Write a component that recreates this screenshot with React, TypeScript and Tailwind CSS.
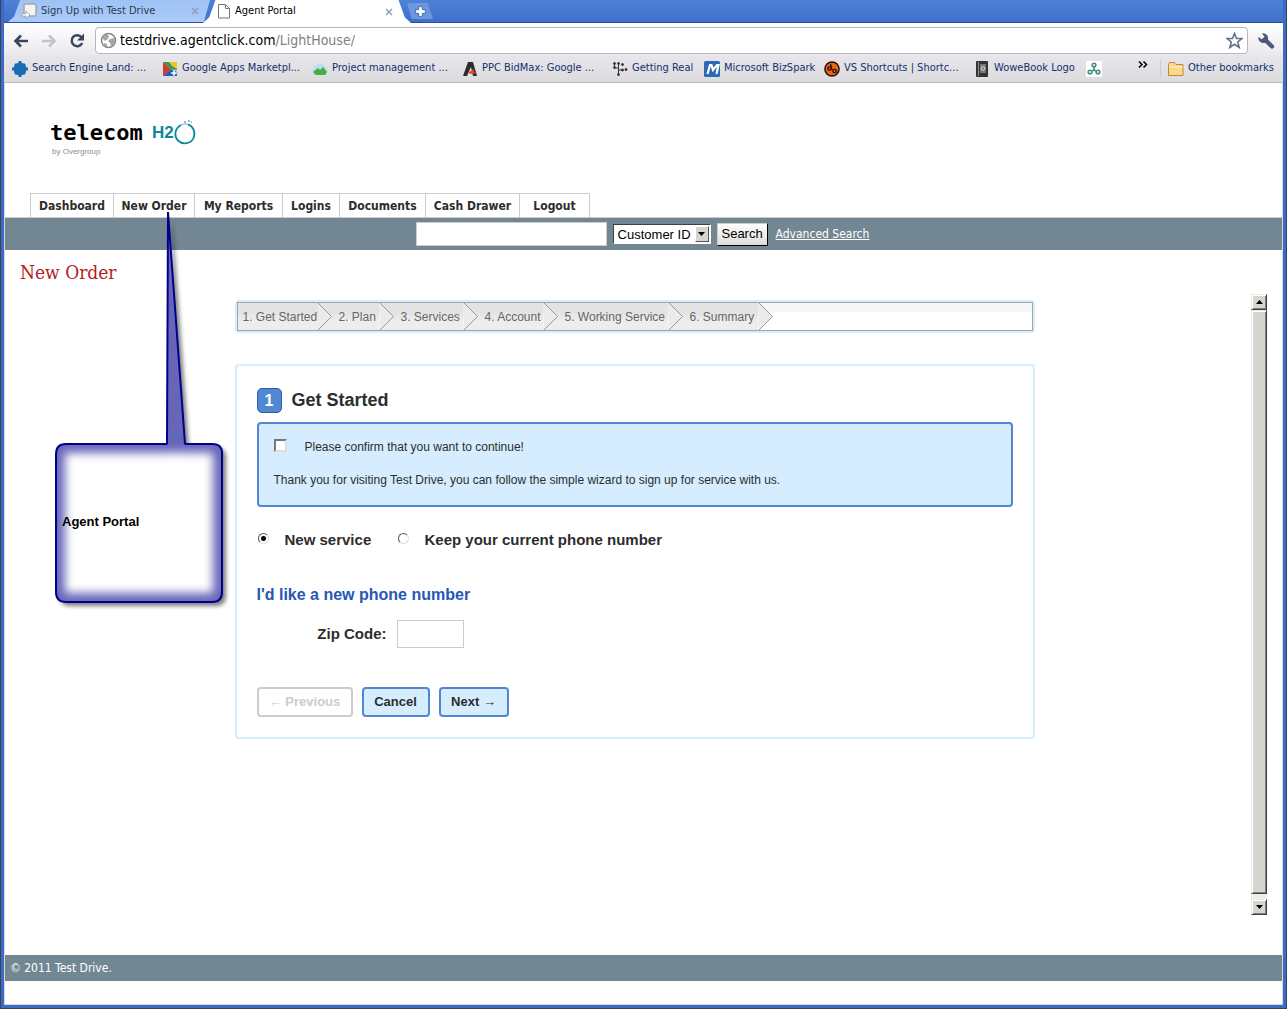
import type { ReactNode } from "react";

const chromeFont = "font-['DejaVu_Sans_Condensed','DejaVu_Sans',sans-serif]";

function CloseMark() {
  return (
    <svg width="8" height="8" viewBox="0 0 8 8" stroke="#8b9bb5" strokeWidth="1.4" aria-hidden="true">
      <path d="M1 1l6 6M7 1L1 7" />
    </svg>
  );
}

function TabStrip() {
  return (
    <div className={`flex h-[23px] items-stretch border-b border-[#2a5198] bg-linear-to-b from-[#4e82d8] to-[#3f6fcb] pl-1 text-[11px] ${chromeFont}`}>
      <div className="z-0 flex w-[202px] items-center bg-linear-to-b from-[#9fc2f5] to-[#abcbf9] pl-[13px] pr-[11px] text-[#2b3a52] [clip-path:polygon(0_100%,3%_75%,6%_0,100%_0,97%_100%)]">
        <svg width="16" height="16" viewBox="0 0 16 16" className="mr-1 shrink-0" aria-hidden="true">
          <rect x="3" y="1" width="12" height="12" rx="1.500" fill="#f4f4f4" stroke="#a5a5a5" strokeWidth="1.500" />
          <path d="M1 10.500h4V8l4 4-4 3.500V13H1z" fill="#fff" stroke="#999" strokeWidth=".8" />
        </svg>
        <span className="flex-1 whitespace-nowrap">Sign Up with Test Drive</span>
        <CloseMark />
      </div>
      <div className="z-10 -ml-[7px] -mb-px flex w-[208px] items-center bg-white pl-[15px] pr-[18px] text-black [clip-path:polygon(0_100%,3%_75%,6%_0,94%_0,97%_75%,100%_100%)]">
        <svg width="12" height="15" viewBox="0 0 12 15" fill="#fff" stroke="#777" className="mr-[5px] shrink-0" aria-hidden="true">
          <path d="M.5 .5h7l4 4v9.500H.5zM7.500 .5v4h4" />
        </svg>
        <span className="flex-1 whitespace-nowrap">Agent Portal</span>
        <CloseMark />
      </div>
      <button aria-label="New tab" className="-ml-1 mt-[3px] flex h-4 w-[26px] items-center justify-center bg-[#6c97dd] [clip-path:polygon(0_0,80%_0,100%_100%,18%_100%)]">
        <svg width="11" height="11" viewBox="0 0 9 9" fill="#fff" stroke="#3563ad" strokeWidth=".7" aria-hidden="true">
          <path d="M3 .5h3V3h2.500v3H6v2.500H3V6H.5V3H3z" />
        </svg>
      </button>
    </div>
  );
}

function Toolbar() {
  return (
    <div className="flex h-8 items-center bg-linear-to-b from-white to-[#ebe9ee] pt-[3px] pl-[9px] pr-2">
      <button aria-label="Back" className="mr-3">
        <svg width="16" height="14" viewBox="0 0 16 14" fill="none" stroke="#3c475c" strokeWidth="2.600" aria-hidden="true">
          <path d="M15 7H3M8 1.500L2.500 7 8 12.500" />
        </svg>
      </button>
      <button aria-label="Forward" className="mr-3">
        <svg width="16" height="14" viewBox="0 0 16 14" fill="none" stroke="#c3c5cb" strokeWidth="2.600" aria-hidden="true">
          <path d="M1 7h12M8 1.500L13.500 7 8 12.500" />
        </svg>
      </button>
      <button aria-label="Reload" className="mr-2.5">
        <svg width="16" height="16" viewBox="0 0 16 16" aria-hidden="true">
          <path d="M12.500 4.200A5.500 5.500 0 1 0 13.200 10" fill="none" stroke="#3c475c" strokeWidth="2.500" />
          <path d="M15 .5v7H8z" fill="#3c475c" />
        </svg>
      </button>
      <div className="flex h-[27px] min-w-0 flex-1 items-center rounded border border-[#b3b7c3] bg-white pl-1 pr-1">
        <svg width="17" height="17" viewBox="0 0 17 17" className="mr-[3px] shrink-0" aria-hidden="true">
          <circle cx="8.500" cy="8.500" r="7" fill="#fff" stroke="#858585" strokeWidth="1.500" />
          <path d="M3 4l4-2 2 2-1 3-3 2-2-2zM10 7l4-1 1 3-2 4-2 1-1-3-2-2zM4 11l3 1v3l-3-2z" fill="#a5a5a5" />
        </svg>
        <div className={`flex-1 truncate text-[14px] text-black ${chromeFont}`}>
          testdrive.agentclick.com<span className="text-[#808080]">/LightHouse/</span>
        </div>
        <svg width="17" height="17" viewBox="0 0 17 17" fill="#fff" stroke="#64718b" strokeWidth="1.600" aria-hidden="true">
          <path d="M8.500 1.500l2 5h5.500l-4.300 3.500 1.500 5.500-4.700-3.200-4.700 3.200 1.500-5.500L1 6.500h5.500z" />
        </svg>
      </div>
      <button aria-label="Settings" className="ml-[9px]">
        <svg width="18" height="18" viewBox="0 0 18 18" aria-hidden="true">
          <path d="M5 1.500a5 5 0 0 1 6 6l5.500 5.500a2 2 0 0 1-3 3L8 10.800A5 5 0 0 1 1.500 5l3.300 2.300 2.700-2.500z" fill="#4a5b7c" />
        </svg>
      </button>
    </div>
  );
}

function Glyph({ children }: { children: ReactNode }) {
  return (
    <svg width="16" height="16" viewBox="0 0 16 16" className="mr-1 shrink-0" aria-hidden="true">
      {children}
    </svg>
  );
}

const bookmarks: { label: string; width: string; icon: ReactNode }[] = [
  {
    label: "Search Engine Land: ...",
    width: "w-[150px]",
    icon: (
      <g fill="#1a6cb4">
        <circle cx="8" cy="8" r="6.500" />
        <path d="M6.500 0h3v16h-3zM0 6.500h16v3H0z" />
        <path d="M2 4l2-2 10 10-2 2zM12 2l2 2L4 14l-2-2z" />
      </g>
    ),
  },
  {
    label: "Google Apps Marketpl...",
    width: "w-[150px]",
    icon: (
      <g>
        <path d="M1 1l8 7-8 7z" fill="#d9382c" />
        <path d="M1 1h6l8 5v3L9 8z" fill="#2f9e44" />
        <path d="M7 1h8v7l-5-3z" fill="#f2c230" />
        <path d="M1 15l8-7 6 3v4z" fill="#1f5fae" />
        <path d="M9 11h2V9h2v2h2v2h-2v2h-2v-2H9z" fill="#fff" stroke="#5580b5" strokeWidth=".5" />
      </g>
    ),
  },
  {
    label: "Project management ...",
    width: "w-[150px]",
    icon: (
      <g>
        <path d="M4 14a4 4 0 0 1-2-7 6 6 0 0 1 11-1 4.300 4.300 0 0 1 0 8z" fill="#b9dff0" />
        <path d="M1 11l5-4 2 2 3-3 4 5-2 3H4z" fill="#45ad45" />
      </g>
    ),
  },
  {
    label: "PPC BidMax: Google ...",
    width: "w-[150px]",
    icon: (
      <g>
        <path d="M6 1h5l4 14h-4L9 6l-4 9H1z" fill="#2c2c2c" />
        <path d="M4 13l8-5v3l3 1-5 1-4-1z" fill="#e8402c" />
      </g>
    ),
  },
  {
    label: "Getting Real",
    width: "w-[92px]",
    icon: (
      <g fill="#333" stroke="#333">
        <path d="M2.500 2v5h4M6.500 2v12M6.500 9H11" fill="none" strokeWidth="1" />
        <circle cx="2.500" cy="2.500" r="1" />
        <circle cx="2.500" cy="6.500" r="1" />
        <circle cx="6.500" cy="2.500" r="1" />
        <circle cx="6.500" cy="13.500" r="1" />
        <circle cx="10.500" cy="3.500" r="1" />
        <circle cx="10.500" cy="9" r="1" />
        <circle cx="14" cy="8.500" r="1" />
      </g>
    ),
  },
  {
    label: "Microsoft BizSpark",
    width: "w-[120px]",
    icon: (
      <g>
        <rect width="16" height="16" rx="1.500" fill="#2d68b8" />
        <path d="M3.500 13L6 4h1.500l1.500 5 4-5h1.500l-2 9" fill="none" stroke="#fff" strokeWidth="2.200" />
      </g>
    ),
  },
  {
    label: "VS Shortcuts | Shortc...",
    width: "w-[150px]",
    icon: (
      <g>
        <circle cx="8" cy="8" r="7.800" fill="#1c1410" />
        <circle cx="8" cy="8" r="6.300" fill="#f0640c" />
        <circle cx="5.500" cy="7.500" r="1.700" fill="none" stroke="#1c1410" strokeWidth="1.300" />
        <circle cx="10.500" cy="10" r="1.700" fill="none" stroke="#1c1410" strokeWidth="1.300" />
        <path d="M6.500 3l1.500 6" stroke="#1c1410" strokeWidth="1.300" />
      </g>
    ),
  },
  {
    label: "WoweBook Logo",
    width: "w-[112px]",
    icon: (
      <g>
        <rect x="2" y="0" width="12" height="16" rx="1" fill="#333" />
        <path d="M4.500 1v14" stroke="#aaa" strokeWidth=".8" />
        <rect x="6" y="3" width="6" height="9" fill="#777" />
        <circle cx="9" cy="7.500" r="1.800" fill="none" stroke="#ddd" />
      </g>
    ),
  },
  {
    label: "",
    width: "w-4",
    icon: (
      <g>
        <rect width="16" height="16" fill="#fff" />
        <g fill="none" stroke="#458c84" strokeWidth="1.600">
          <circle cx="8" cy="4" r="1.800" />
          <circle cx="4" cy="11" r="1.800" />
          <circle cx="12" cy="11" r="1.800" />
          <path d="M8 6v3l-2 1M8 9l2 1" />
        </g>
      </g>
    ),
  },
];

function Bookmarks() {
  return (
    <nav aria-label="Bookmarks" className={`flex h-[28px] items-center border-b border-[#b5bac8] bg-linear-to-b from-[#e8e6eb] to-[#dcdbdd] pl-2 pr-[9px] text-[11px] text-[#15306e] ${chromeFont}`}>
      {bookmarks.map((b) => (
        <a key={b.label} href="#" aria-label={b.label || "Bookmark"} className={`flex shrink-0 items-center whitespace-nowrap ${b.width}`}>
          <Glyph>{b.icon}</Glyph>
          {b.label}
        </a>
      ))}
      <button aria-label="More bookmarks" className="ml-auto mr-3 mb-2">
        <svg width="10" height="7" viewBox="0 0 10 7" fill="none" stroke="#000" strokeWidth="1.500" aria-hidden="true">
          <path d="M1 .5l3 3-3 3M5.500 .5l3 3-3 3" />
        </svg>
      </button>
      <a href="#" className="flex items-center border-l border-[#ccced4] pl-1.5">
        <svg width="16" height="14" viewBox="0 0 16 14" className="mr-1 ml-px" aria-hidden="true">
          <path d="M.5 2.500l1-2h5l1.500 2h7v11H.5z" fill="#fbd88c" stroke="#b98a3a" />
          <path d="M1 5h14" stroke="#fff0c8" />
        </svg>
        Other bookmarks
      </a>
    </nav>
  );
}

function Logo() {
  return (
    <a href="#" aria-label="telecom H2O by Overgroup" className="block w-[150px] pt-[36px]">
      <div className="flex h-[28px] items-center">
        <span className="w-[102px] font-['DejaVu_Sans_Mono',monospace] text-[22px] leading-7 font-bold text-black">telecom</span>
        <span className="w-[21px] font-['Liberation_Sans',sans-serif] text-[17px] leading-7 font-bold text-[#0d8799]">H2</span>
        <svg width="24" height="26" viewBox="0 0 24 26" fill="none" stroke="#0d8799" aria-hidden="true">
          <path d="M8 5C2 8 .500 16 5 20.500s13 3.500 15.500-2.500S20 6 15 4.500" strokeWidth="1.800" />
          <path d="M7 6c3-2.500 6-2.500 9-1" strokeWidth=".7" />
          <path d="M11 2h2M15 1h2M18 2h1" strokeWidth="1.200" />
        </svg>
      </div>
      <div className="pl-0.5 font-['Liberation_Sans',sans-serif] text-[8px] leading-[10px] text-[#8c8c8c]">by Overgroup</div>
    </a>
  );
}

const navItems = [
  ["Dashboard", "w-[84px]"],
  ["New Order", "w-[81px]"],
  ["My Reports", "w-[88px]"],
  ["Logins", "w-[57px]"],
  ["Documents", "w-[86px]"],
  ["Cash Drawer", "w-[94px]"],
  ["Logout", "w-[70px]"],
];

function SearchBar() {
  return (
    <form className="flex h-[33px] items-center justify-center border-t border-[#ccc] bg-[#738793] pr-0.5 font-['Liberation_Sans',sans-serif] text-[13px]">
      <input type="text" aria-label="Search text" className="mr-1.5 h-6 w-[191px] border border-[#ccc] bg-white px-1" />
      <div className="relative mr-1.5 h-5 w-[98px]">
        <select aria-label="Search by" className="h-5 w-full appearance-none border border-t-[#404040] border-l-[#404040] border-r-white border-b-white bg-white pl-1 text-black">
          <option>Customer ID</option>
        </select>
        <span className="pointer-events-none absolute top-0.5 right-0.5 flex h-4 w-[14px] items-center justify-center border border-t-white border-l-white border-r-[#555] border-b-[#555] bg-[#d6d6ce]">
          <svg width="7" height="4" viewBox="0 0 7 4" aria-hidden="true"><path d="M0 0h7L3.500 4z" /></svg>
        </span>
      </div>
      <button type="button" className="mr-2 h-[23px] w-[51px] border border-t-[#ccc] border-l-[#ccc] border-r-black border-b-black bg-linear-to-b from-white to-[#dfdcd8] text-black">Search</button>
      <a href="#" className={`text-[12px] whitespace-nowrap text-white underline ${chromeFont}`}>Advanced Search</a>
    </form>
  );
}

const steps = [
  ["1. Get Started", "w-[94px]"],
  ["2. Plan", "w-[76px]"],
  ["3. Services", "w-[98px]"],
  ["4. Account", "w-[94px]"],
  ["5. Working Service", "w-[139px]"],
  ["6. Summary", "w-[104px]"],
];

function Steps() {
  return (
    <div className="rounded-[4px] border-2 border-[#d5eefe]">
      <ol className="flex h-[29px] border border-[#a5a5a5] bg-linear-to-b from-[#f6f6f6] from-35% to-white to-35%">
        {steps.map(([label, width], i) => (
          <li key={label} className={`flex ${width} ${i === 0 ? "" : "-ml-[14px]"}`}>
            <span className={`flex flex-1 items-center bg-linear-to-b from-[#e3e3e3] from-35% to-[#ededed] to-65% whitespace-nowrap text-[#666] ${i === 0 ? "pl-[5px]" : "pl-[21px] [clip-path:polygon(0_0,100%_0,100%_100%,0_100%,14px_50%)]"}`}>
              {label}
            </span>
            <svg width="14" height="27" viewBox="0 0 14 27" className="relative z-10 shrink-0" aria-hidden="true">
              <path d="M0 0l13.500 13.500L0 27z" fill="#ebebeb" />
              <path d="M0 0l13.500 13.500L0 27" fill="none" stroke="#999" />
            </svg>
          </li>
        ))}
      </ol>
    </div>
  );
}

const radioClass =
  "size-[11px] shrink-0 appearance-none rounded-full border border-t-[#555] border-l-[#555] border-r-[#ddd] border-b-[#ddd] bg-white checked:bg-[radial-gradient(circle,#000_0_2px,#fff_3px)]";
const wizardButton = "h-[30px] rounded-[4px] border-2 whitespace-nowrap text-[13px] font-bold";

function Wizard() {
  return (
    <section className="mt-[31px] rounded-[4px] border-2 border-[#d5eefe] px-5 pt-[22px] pb-5">
      <h2 className="flex items-center text-[18px] leading-[25px] font-bold text-[#2d2d2d]">
        <span className="mr-2.5 flex size-[25px] items-center justify-center rounded-[5px] border border-[#2d5cb8] bg-[#5288d2] text-[16px] text-white">1</span>
        Get Started
      </h2>
      <div className="mt-[9px] h-[85px] rounded-[4px] border-2 border-[#5187d2] bg-[#d5edfe] px-[15px] pt-3.5">
        <label className="flex h-[18px] items-center">
          <input type="checkbox" className="mr-[18px] mb-1 size-[13px] appearance-none border-2 border-t-[#777] border-l-[#777] border-r-[#ddd] border-b-[#ddd] bg-white checked:bg-[#333]" />
          Please confirm that you want to continue!
        </label>
        <p className="mt-[15px] leading-[18px]">Thank you for visiting Test Drive, you can follow the simple wizard to sign up for service with us.</p>
      </div>
      <fieldset className="mt-6 flex h-[18px] items-center text-[15px] font-bold">
        <label className="flex items-center">
          <input type="radio" name="service" defaultChecked className={`mr-4 mb-1 ml-px ${radioClass}`} />
          <span className="w-[113px]">New service</span>
        </label>
        <label className="flex items-center">
          <input type="radio" name="service" className={`mr-4 mb-1 ${radioClass}`} />
          Keep your current phone number
        </label>
      </fieldset>
      <h3 className="mt-9 text-[16px] leading-5 font-bold text-[#2657b4]">I'd like a new phone number</h3>
      <div className="mt-[15px] flex items-center">
        <label htmlFor="zip" className="mr-2.5 w-[130px] text-right text-[15px] font-bold">Zip Code:</label>
        <input id="zip" type="text" className="h-7 w-[67px] border border-[#ccc] bg-white px-1" />
      </div>
      <div className="mt-[39px] flex gap-[9px]">
        <button disabled className={`w-24 border-[#ccc] bg-white text-[#ccc] ${wizardButton}`}>← Previous</button>
        <button className={`w-[68px] border-[#5187d2] bg-[#d5edfe] text-[#2d2d2d] ${wizardButton}`}>Cancel</button>
        <button className={`w-[70px] border-[#5187d2] bg-[#d5edfe] text-[#2d2d2d] ${wizardButton}`}>Next →</button>
      </div>
    </section>
  );
}

const bevel = "border border-t-[#e8e8e4] border-l-[#e8e8e4] border-r-[#404040] border-b-[#404040] bg-[#d6d6ce] shadow-[inset_1px_1px_0_#fff,inset_-1px_-1px_0_#808080]";

function ScrollBar() {
  return (
    <div className="flex w-4 shrink-0 flex-col bg-[#eeeeea]">
      <button aria-label="Scroll up" className={`flex h-4 items-center justify-center ${bevel}`}>
        <svg width="7" height="4" viewBox="0 0 7 4" aria-hidden="true"><path d="M0 4h7L3.500 0z" /></svg>
      </button>
      <div className={`flex-1 ${bevel}`} />
      <button aria-label="Scroll down" className={`mt-[5px] flex h-4 items-center justify-center ${bevel}`}>
        <svg width="7" height="4" viewBox="0 0 7 4" aria-hidden="true"><path d="M0 0h7L3.500 4z" /></svg>
      </button>
    </div>
  );
}

const calloutPath = "M118 7L135 239H163Q172 239 172 248V387Q172 397 162 397H16Q6 397 6 387V249Q6 239 16 239H117Z";

function Callout() {
  return (
    <aside className="pointer-events-none absolute top-[205px] left-[46px] z-20 h-[412px] w-[186px]">
      <svg width="186" height="412" viewBox="0 0 186 412" aria-hidden="true">
        <defs>
          <clipPath id="callout-clip"><path d={calloutPath} /></clipPath>
          <filter id="callout-glow" x="-20%" y="-20%" width="140%" height="140%"><feGaussianBlur stdDeviation="5" /></filter>
          <filter id="callout-shadow" x="-20%" y="-20%" width="140%" height="140%"><feGaussianBlur stdDeviation="2" /></filter>
        </defs>
        <path d={calloutPath} transform="translate(4 4)" fill="#000" opacity=".5" filter="url(#callout-shadow)" />
        <path d={calloutPath} fill="#fff" />
        <g clipPath="url(#callout-clip)">
          <path d={calloutPath} fill="none" stroke="#00008b" strokeWidth="18" opacity=".6" filter="url(#callout-glow)" />
        </g>
        <path d={calloutPath} fill="none" stroke="#00008b" strokeWidth="2" strokeLinejoin="bevel" />
      </svg>
      <p className="absolute top-[308px] left-3 text-[13px] leading-[18px] font-bold text-black">Agent Portal</p>
    </aside>
  );
}

export default function App() {
  return (
    <div className="flex min-h-screen flex-col border-x border-b border-[#3d4350] bg-white font-['Liberation_Sans',sans-serif] text-[12px] text-[#2d2d2d]">
      <div className="relative flex flex-1 flex-col border-x-3 border-b-3 border-[#3b6bc6]">
        <TabStrip />
        <Toolbar />
        <Bookmarks />
        <div className="flex flex-1 flex-col border-x border-b border-[#d8d8d8]">
          <header>
            <div className="h-[110px] pl-[45px]"><Logo /></div>
            <nav aria-label="Main" className={`ml-[25px] flex h-6 text-[12px] font-bold ${chromeFont}`}>
              {navItems.map(([label, width], i) => (
                <a key={label} href="#" className={`flex items-center justify-center border-t border-r border-[#ccc] whitespace-nowrap ${i === 0 ? "border-l" : ""} ${width}`}>{label}</a>
              ))}
            </nav>
            <SearchBar />
          </header>
          <main className="flex flex-1 flex-col px-[15px] pb-10">
            <h1 className="pt-2 pb-2 font-['DejaVu_Serif_Condensed','DejaVu_Serif',serif] text-[19px] leading-7 text-[#b22222]">New Order</h1>
            <div className="flex flex-1">
              <div className="min-w-0 flex-1 pt-1.5 pr-[17px] pl-[15px]">
                <div className="mx-auto max-w-[800px]">
                  <Steps />
                  <Wizard />
                </div>
              </div>
              <ScrollBar />
            </div>
          </main>
          <footer className={`flex h-[26px] items-center bg-[#738793] pl-[5px] text-[12px] text-white ${chromeFont}`}>© 2011 Test Drive.</footer>
          <div className="h-[23px]" />
        </div>
        <Callout />
      </div>
    </div>
  );
}
